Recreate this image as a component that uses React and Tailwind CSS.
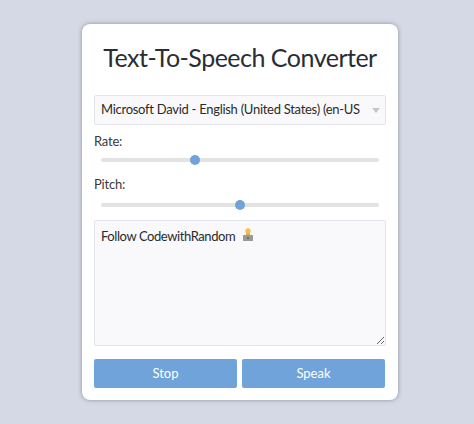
import React from 'react';

const sliderClass =
  'block w-full h-[4px] appearance-none rounded-full bg-[#e2e2e2] outline-none [&::-webkit-slider-thumb]:appearance-none [&::-webkit-slider-thumb]:w-[10px] [&::-webkit-slider-thumb]:h-[10px] [&::-webkit-slider-thumb]:rounded-full [&::-webkit-slider-thumb]:bg-[#6fa3da]';

const App = () => {
  return (
    <div className="w-full h-[424px] bg-[#d5d9e5] pt-[24px] font-['Lato',sans-serif] text-[#2b2b2b] overflow-hidden">
      <div className="ml-[82px] w-[316px] h-[376px] bg-white rounded-[8px] shadow-[0_0_4px_rgba(90,95,115,0.6)] px-[12px]">
        <h1 className="pt-[14px] h-[71px] text-center text-[25px] leading-[38px] tracking-[-0.5px] font-normal text-[#2a2d33] whitespace-nowrap">
          Text-To-Speech Converter
        </h1>

        <div className="relative">
          <select className="block w-full h-[30px] appearance-none bg-[#f9f9fb] border border-[#e4e5ea] rounded-[2px] pl-[6px] pr-[25px] text-[13px] tracking-[-0.28px] text-[#2b2b2b] outline-none">
            <option>Microsoft David - English (United States) (en-US)</option>
          </select>
          <svg className="absolute right-[6px] top-[13px]" width="8" height="5" viewBox="0 0 8 5">
            <path d="M0 0h8L4 5z" fill="#c4c5c9" />
          </svg>
        </div>

        <label className="block mt-[6px] h-[20px] text-[13px] leading-[20px] tracking-[-0.2px] text-[#3a3a3a]">Rate:</label>
        <div className="px-[7px] pt-[7px] pb-[12px]">
          <input type="range" min="0.5" max="2" step="0.1" defaultValue="1" className={sliderClass} />
        </div>

        <label className="block h-[20px] text-[13px] leading-[20px] tracking-[-0.2px] text-[#3a3a3a]">Pitch:</label>
        <div className="px-[7px] pt-[9px] pb-[13px]">
          <input type="range" min="0" max="2" step="0.1" defaultValue="1" className={sliderClass} />
        </div>

        <div className="relative">
          <textarea
            defaultValue="Follow CodewithRandom"
            className="block w-full h-[126px] bg-[#f9f9fb] border border-[#e4e5ea] rounded-[2px] px-[6px] pt-[5px] pb-[6px] text-[13px] leading-[20px] tracking-[-0.42px] text-[#2b2b2b] outline-none"
          />
          {/* emoji from the typed text, drawn so the colours match */}
          <svg className="absolute left-[148px] top-[8px]" width="12" height="14" viewBox="0 0 12 14">
            <circle cx="6" cy="3" r="2.7" fill="#f2c24f" />
            <rect x="4" y="5" width="4" height="2.5" fill="#e2b04a" />
            <rect x="1" y="7" width="10" height="6" rx="0.5" fill="#9a9a94" />
            <rect x="5" y="9" width="2" height="2" fill="#6d6d68" />
          </svg>
        </div>

        <div className="flex gap-[5px] mt-[13px] pr-[1px]">
          <button className="flex-1 h-[29px] bg-[#6fa3da] rounded-[2px] text-white text-[13px]">Stop</button>
          <button className="flex-1 h-[29px] bg-[#6fa3da] rounded-[2px] text-white text-[13px]">Speak</button>
        </div>
      </div>
    </div>
  );
};

export default App;
